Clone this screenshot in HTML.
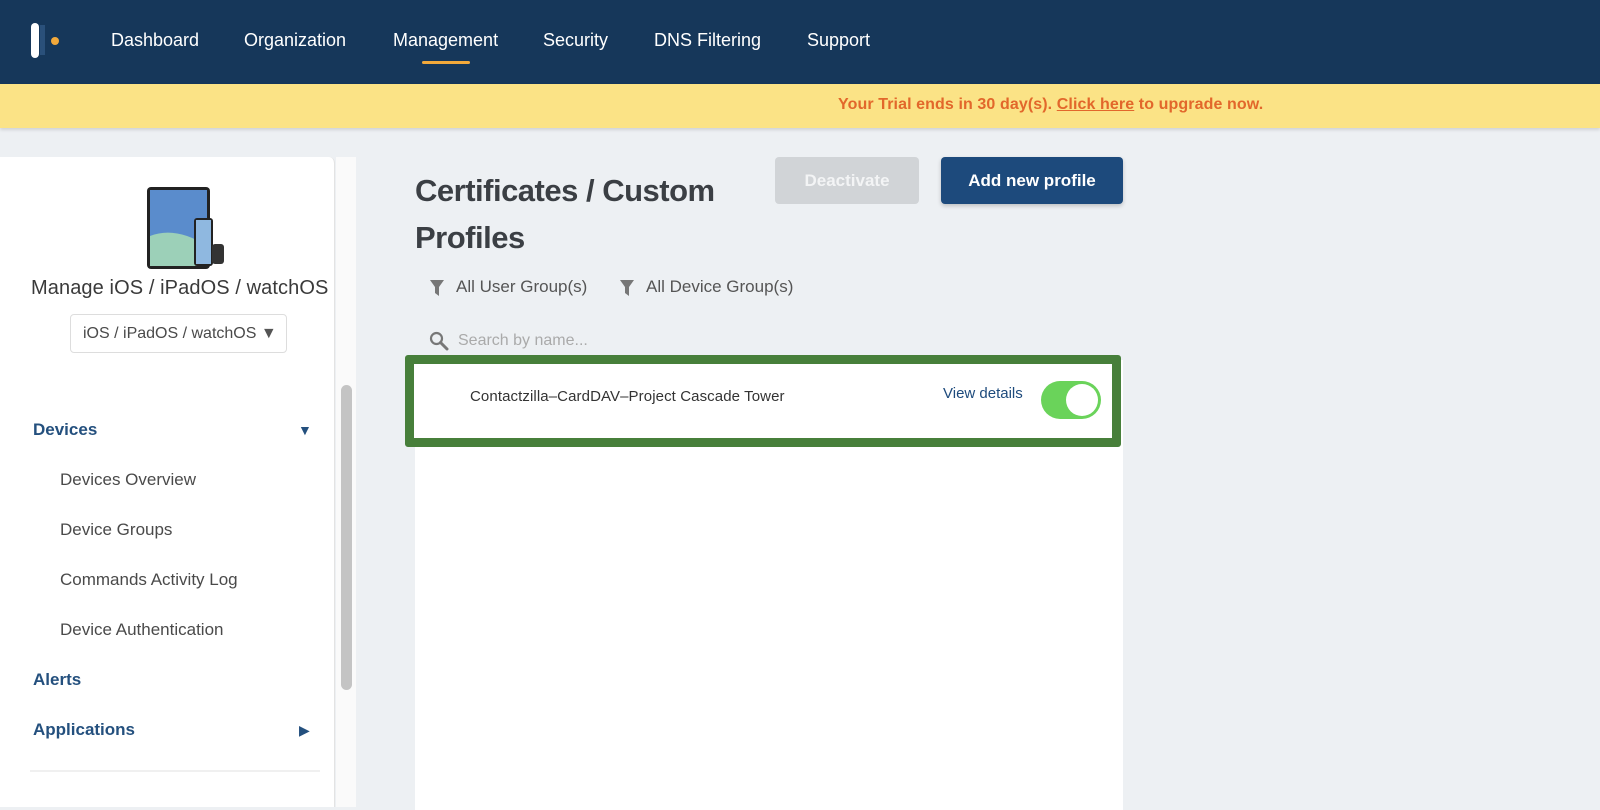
<!DOCTYPE html>
<html><head><meta charset="utf-8"><style>
*{box-sizing:border-box;margin:0;padding:0}
body{width:1600px;height:803px;overflow:hidden;background:#edf0f3;font-family:"Liberation Sans",sans-serif;position:relative}
.top{position:absolute;left:0;top:0;width:1600px;height:84px;background:#16375a}
.nav{position:absolute;top:30px;color:#fff;font-size:18px}
.banner{position:absolute;left:0;top:84px;width:1600px;height:44px;background:#fbe386;box-shadow:0 2px 3px rgba(0,0,0,.12)}
.banner span{position:absolute;left:838px;top:12px;color:#e2672b;font-size:16px;font-weight:bold;letter-spacing:.1px}
.side{position:absolute;left:0;top:157px;width:335px;height:650px;background:#fff;border-right:1px solid #e3e3e3;border-radius:0 6px 0 0}
.track{position:absolute;left:336px;top:157px;width:20px;height:650px;background:#fafafa}
.thumb{position:absolute;left:341px;top:385px;width:11px;height:305px;background:#c4c4c4;border-radius:6px}
.s{position:absolute;font-size:17px;color:#4a4a4a}
.h{position:absolute;font-size:17px;color:#24507e;font-weight:bold;left:33px}
.panel{position:absolute;left:415px;top:360px;width:708px;height:450px;background:#fff}
</style></head><body>
<div class="top">
<div style="position:absolute;left:31px;top:23px;width:8px;height:35px;background:#fff;border-radius:4px"></div>
<div style="position:absolute;left:40px;top:25px;width:5px;height:30px;background:#2a507a"></div>
<div style="position:absolute;left:51px;top:37px;width:8px;height:8px;background:#f2a93b;border-radius:50%"></div>
<div class="nav" style="left:111px">Dashboard</div>
<div class="nav" style="left:244px">Organization</div>
<div class="nav" style="left:393px">Management</div>
<div style="position:absolute;left:422px;top:61px;width:48px;height:3px;background:#f2a93b;border-radius:2px"></div>
<div class="nav" style="left:543px">Security</div>
<div class="nav" style="left:654px">DNS Filtering</div>
<div class="nav" style="left:807px">Support</div>
</div>
<div class="banner"><span>Your Trial ends in 30 day(s). <u>Click here</u> to upgrade now.</span></div>

<div class="side"></div>
<div class="track"></div><div class="thumb"></div>
<svg style="position:absolute;left:146px;top:186px" width="82" height="84" viewBox="0 0 82 84">
<rect x="1" y="1" width="63" height="82" rx="4" fill="#222"/>
<rect x="4" y="4" width="57" height="76" fill="#5a8ccc"/>
<path d="M4 50 Q30 40 61 60 V80 H4Z" fill="#9cd0b8"/>
<rect x="48" y="32" width="19" height="48" rx="3" fill="#222"/>
<rect x="50" y="34" width="15" height="44" fill="#8fb8e0"/>
<rect x="66" y="58" width="12" height="20" rx="3" fill="#333"/>
</svg>
<div style="position:absolute;left:31px;top:277px;font-size:20px;color:#3a3a3a;letter-spacing:.1px">Manage iOS / iPadOS / watchOS</div>
<div style="position:absolute;left:70px;top:314px;width:217px;height:39px;border:1px solid #ddd;border-radius:4px;font-size:16px;color:#4a4a4a;padding:10px 0 0 12px">iOS / iPadOS / watchOS <span style="color:#555">▼</span></div>
<div class="h" style="top:420px">Devices</div><div style="position:absolute;left:298px;top:422px;color:#24507e;font-size:14px">▼</div>
<div class="s" style="left:60px;top:470px">Devices Overview</div>
<div class="s" style="left:60px;top:520px">Device Groups</div>
<div class="s" style="left:60px;top:570px">Commands Activity Log</div>
<div class="s" style="left:60px;top:620px">Device Authentication</div>
<div class="h" style="top:670px">Alerts</div>
<div class="h" style="top:720px">Applications</div><div style="position:absolute;left:299px;top:722px;color:#24507e;font-size:14px">▶</div>
<div style="position:absolute;left:30px;top:770px;width:290px;height:2px;background:#f0f0f0"></div>

<div style="position:absolute;left:415px;top:167px;font-size:31px;font-weight:bold;color:#3b3f44;line-height:47px;letter-spacing:-.5px">Certificates / Custom<br>Profiles</div>
<div style="position:absolute;left:775px;top:157px;width:144px;height:47px;background:#d1d4d7;border-radius:4px;color:#f3f4f5;font-size:17px;font-weight:bold;text-align:center;line-height:47px">Deactivate</div>
<div style="position:absolute;left:941px;top:157px;width:182px;height:47px;background:#1d4a7c;border-radius:4px;color:#fff;font-size:17px;font-weight:bold;text-align:center;line-height:47px;box-shadow:0 2px 4px rgba(0,0,0,.2)">Add new profile</div>
<svg style="position:absolute;left:429px;top:279px" width="16" height="18"><path d="M1 1H15L10 8V17L6 14V8Z" fill="#777"/></svg>
<div class="s" style="left:456px;top:277px;color:#555">All User Group(s)</div>
<svg style="position:absolute;left:619px;top:279px" width="16" height="18"><path d="M1 1H15L10 8V17L6 14V8Z" fill="#777"/></svg>
<div class="s" style="left:646px;top:277px;color:#555">All Device Group(s)</div>
<svg style="position:absolute;left:429px;top:331px" width="20" height="20"><circle cx="7.5" cy="7.5" r="5.5" fill="none" stroke="#777" stroke-width="2.2"/><path d="M11.5 11.5L18 18" stroke="#777" stroke-width="3" stroke-linecap="round"/></svg>
<div class="s" style="left:458px;top:332px;color:#aaa;font-size:16px">Search by name...</div>
<div class="panel"></div>
<div style="position:absolute;left:405px;top:355px;width:716px;height:92px;border:9px solid #477f3a;border-radius:3px;background:#fff"></div>
<div style="position:absolute;left:470px;top:388px;font-size:15px;color:#333;letter-spacing:.1px">Contactzilla–CardDAV–Project Cascade Tower</div>
<div style="position:absolute;left:943px;top:385px;font-size:15px;color:#1d4a7c">View details</div>
<div style="position:absolute;left:1041px;top:381px;width:60px;height:38px;background:#6ad35a;border-radius:19px"><div style="position:absolute;right:3px;top:3px;width:32px;height:32px;background:#fff;border-radius:50%"></div></div>
</body></html>
